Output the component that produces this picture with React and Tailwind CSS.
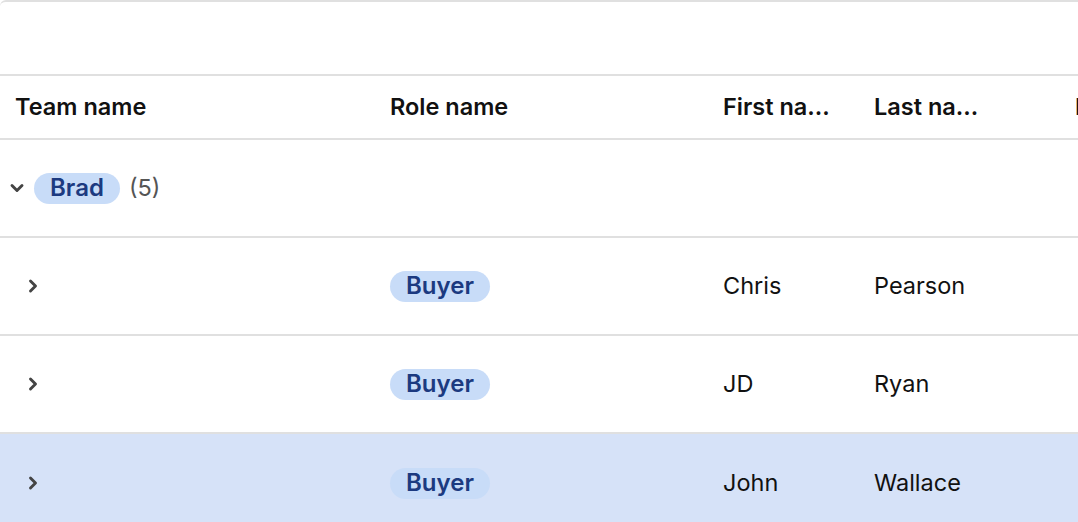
import { ChevronDown, ChevronRight } from 'lucide-react'

const rows = [
    { role: 'Buyer', first: 'Chris', last: 'Pearson', selected: false },
    { role: 'Buyer', first: 'JD', last: 'Ryan', selected: false },
    { role: 'Buyer', first: 'John', last: 'Wallace', selected: true },
]

function Badge({ children }) {
    return (
        <span className="inline-flex items-center h-[31px] px-[16px] rounded-full bg-[#c8dcf8] text-[#1c3a80] text-[24px] font-semibold leading-none">
            {children}
        </span>
    )
}

export default function App() {
    return (
        <div className="w-[1078px] h-[522px] overflow-hidden bg-white text-[#111] font-['Inter',sans-serif]">
            {/* toolbar area */}
            <div className="h-[76px] border-y-2 border-[#e0e0e0] rounded-tl-[6px]" />

            {/* header */}
            <div className="flex items-center h-[64px] border-b-2 border-[#e0e0e0] text-[23.5px] font-semibold whitespace-nowrap">
                <div className="w-[375px] shrink-0 pl-[15px]">Team name</div>
                <div className="w-[333px] shrink-0 pl-[15px]">Role name</div>
                <div className="w-[151px] shrink-0 pl-[15px] pr-[22px] truncate">First name</div>
                <div className="w-[201px] shrink-0 pl-[15px] pr-[76px] truncate">Last name</div>
                <div className="shrink-0 pl-[15px]">Email</div>
            </div>

            {/* group row */}
            <div className="flex items-center h-[98px] border-b-2 border-[#e0e0e0]">
                <ChevronDown size={20} strokeWidth={3.5} className="ml-[7px] mr-[7px] text-[#444]" />
                <Badge>Brad</Badge>
                <span className="ml-[9px] text-[23.5px] text-[#555]">(5)</span>
            </div>

            {rows.map((r, i) => (
                <div key={i}
                     className={`flex items-center h-[98px] text-[23.5px] ${r.selected ? 'bg-[#d6e2f8]' : 'border-b-2 border-[#e0e0e0]'}`}>
                    <div className="w-[375px] shrink-0 pl-[23px]">
                        <ChevronRight size={20} strokeWidth={3.5} className="text-[#444]" />
                    </div>
                    <div className="w-[333px] shrink-0 pl-[15px]"><Badge>{r.role}</Badge></div>
                    <div className="w-[151px] shrink-0 pl-[15px]">{r.first}</div>
                    <div className="w-[201px] shrink-0 pl-[15px]">{r.last}</div>
                </div>
            ))}
        </div>
    )
}
